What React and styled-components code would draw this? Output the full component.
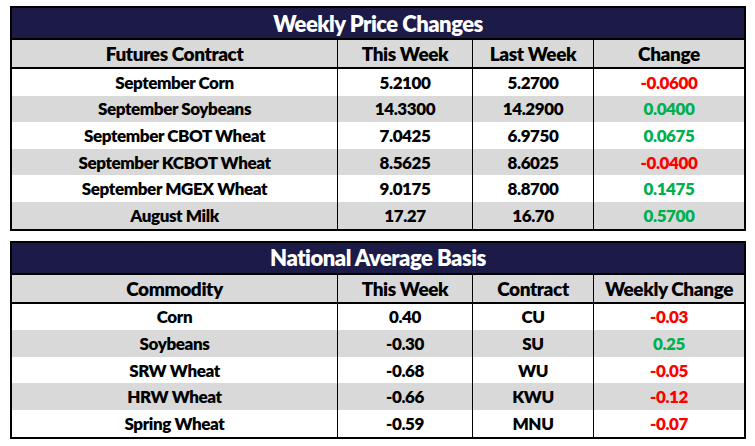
import React from 'react';
import styled, { createGlobalStyle, css } from 'styled-components';

const GlobalStyle = createGlobalStyle`
  html, body {
    margin: 0;
    padding: 0;
    background: #ffffff;
  }
  body {
    font-family: Lato, "Liberation Sans", sans-serif;
    font-weight: 800;
    color: #000;
  }
`;

const Page = styled.div`
  display: flex;
  flex-direction: column;
  gap: 10px;
  padding: 6px 0 0 10px;
  width: 736px;
`;

const Table = styled.div`
  border: 2px solid #000;
  display: flex;
  flex-direction: column;
`;

const Title = styled.div`
  height: 30px;
  background: #1c1b47;
  color: #fff;
  font-size: 22px;
  letter-spacing: -0.5px;
  display: flex;
  align-items: center;
  justify-content: center;
  border-bottom: 2px solid #000;
`;

const Row = styled.div`
  display: grid;
  grid-template-columns: 325px 135px 121px 1fr;
  height: ${p => (p.head ? '27px' : '26.6px')};
  background: ${p => (p.shade ? '#d9d9d9' : '#ffffff')};
  font-size: ${p => (p.head ? '19px' : '17px')};
  letter-spacing: -0.4px;
  ${p =>
    p.head &&
    css`
      border-bottom: 2px solid #000;
    `}
`;

const Cell = styled.div`
  display: flex;
  align-items: center;
  justify-content: center;
  & + & {
    border-left: 1px solid #000;
  }
  ${p =>
    p.tone === 'up' &&
    css`
      color: #00b050;
    `}
  ${p =>
    p.tone === 'down' &&
    css`
      color: #ff0000;
    `}
`;

const prices = [
  ['September Corn', '5.2100', '5.2700', '-0.0600'],
  ['September Soybeans', '14.3300', '14.2900', '0.0400'],
  ['September CBOT Wheat', '7.0425', '6.9750', '0.0675'],
  ['September KCBOT Wheat', '8.5625', '8.6025', '-0.0400'],
  ['September MGEX Wheat', '9.0175', '8.8700', '0.1475'],
  ['August Milk', '17.27', '16.70', '0.5700'],
];

const basis = [
  ['Corn', '0.40', 'CU', '-0.03'],
  ['Soybeans', '-0.30', 'SU', '0.25'],
  ['SRW Wheat', '-0.68', 'WU', '-0.05'],
  ['HRW Wheat', '-0.66', 'KWU', '-0.12'],
  ['Spring Wheat', '-0.59', 'MNU', '-0.07'],
];

function tone(v) {
  return v.startsWith('-') ? 'down' : 'up';
}

function DataTable({ title, head, rows }) {
  return (
    <Table>
      <Title>{title}</Title>
      <Row head shade>
        {head.map(h => (
          <Cell key={h}>{h}</Cell>
        ))}
      </Row>
      {rows.map((r, i) => (
        <Row key={r[0]} shade={i % 2 === 1}>
          <Cell>{r[0]}</Cell>
          <Cell>{r[1]}</Cell>
          <Cell>{r[2]}</Cell>
          <Cell tone={tone(r[3])}>{r[3]}</Cell>
        </Row>
      ))}
    </Table>
  );
}

export default function App() {
  return (
    <>
      <GlobalStyle />
      <Page>
        <DataTable
          title="Weekly Price Changes"
          head={['Futures Contract', 'This Week', 'Last Week', 'Change']}
          rows={prices}
        />
        <DataTable
          title="National Average Basis"
          head={['Commodity', 'This Week', 'Contract', 'Weekly Change']}
          rows={basis}
        />
      </Page>
    </>
  );
}
